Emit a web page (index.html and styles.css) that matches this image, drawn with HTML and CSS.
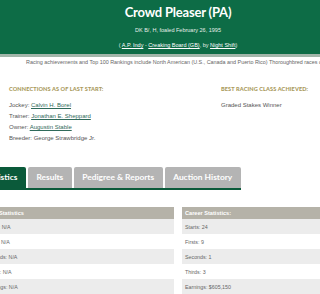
FILE: index.html
```html
<!DOCTYPE html>
<html lang="en">
<head>
    <meta charset="UTF-8">
    <meta name="viewport" content="width=device-width, initial-scale=1.0">
    <title>Crowd Pleaser (PA)</title>
    <link rel="stylesheet" href="styles.css">
</head>
<body>
    <div class="page">
        <header class="hero">
            <h1>Crowd Pleaser (PA)</h1>
            <p class="hero-meta">DK B/, H, foaled February 26, 1995</p>
            <p class="hero-meta hero-pedigree">( <a href="#">A.P. Indy</a> - <a href="#">Creaking Board (GB)</a>, by <a href="#">Night Shift</a>)</p>
        </header>

        <p class="disclaimer">Racing achievements and Top 100 Rankings include North American (U.S., Canada and Puerto Rico) Thoroughbred races only.</p>

        <div class="info">
            <div class="info-col">
                <h3>Connections as of last start:</h3>
                <p>Jockey: <a href="#">Calvin H. Borel</a></p>
                <p>Trainer: <a href="#">Jonathan E. Sheppard</a></p>
                <p>Owner: <a href="#">Augustin Stable</a></p>
                <p>Breeder: George Strawbridge Jr.</p>
            </div>
            <div class="info-col">
                <h3>Best racing class achieved:</h3>
                <p>Graded Stakes Winner</p>
            </div>
        </div>

        <ul class="tabs">
            <li class="tab active">Statistics</li>
            <li class="tab">Results</li>
            <li class="tab">Pedigree &amp; Reports</li>
            <li class="tab">Auction History</li>
        </ul>

        <div class="stats">
            <table class="stat-table">
                <tr><th>2024 Statistics</th></tr>
                <tr><td>Starts: N/A</td></tr>
                <tr><td>Firsts: N/A</td></tr>
                <tr><td>Seconds: N/A</td></tr>
                <tr><td>Thirds: N/A</td></tr>
                <tr><td>Earnings: N/A</td></tr>
            </table>
            <table class="stat-table">
                <tr><th>Career Statistics:</th></tr>
                <tr><td>Starts: 24</td></tr>
                <tr><td>Firsts: 9</td></tr>
                <tr><td>Seconds: 1</td></tr>
                <tr><td>Thirds: 3</td></tr>
                <tr><td>Earnings: $605,150</td></tr>
            </table>
        </div>
    </div>
</body>
</html>
```

FILE: styles.css
```css
html, body {
    overflow: hidden;
}
body {
    margin: 0;
    font-family: 'Liberation Sans', Arial, sans-serif;
    color: #555;
    background: #fff;
}
.page {
    width: 420px;
    margin-left: -32px;
}
.hero {
    background: #0d6c46;
    border-bottom: 3px solid #a2b6aa;
    color: #fff;
    text-align: center;
    padding: 3px 0 5px;
}
.hero h1 {
    margin: 0;
    font-family: 'Lato', sans-serif;
    font-weight: 700;
    font-size: 13px;
    line-height: 18px;
    letter-spacing: -0.2px;
}
.hero-meta {
    margin: 5px 0 0;
    font-size: 5.5px;
    line-height: 8px;
    color: #e6efe9;
}
.hero-pedigree {
    margin-top: 7px;
}
.hero-meta a {
    color: #fff;
}
.disclaimer {
    margin: 1px 0 0;
    text-align: center;
    white-space: nowrap;
    font-size: 5.4px;
    line-height: 8px;
    color: #666;
}
.info {
    display: flex;
    padding-left: 41px;
    margin-top: 19px;
}
.info-col:first-child {
    width: 212px;
}
.info h3 {
    margin: 0 0 7px;
    font-family: 'Lato', sans-serif;
    font-weight: 900;
    font-size: 5.6px;
    line-height: 8px;
    text-transform: uppercase;
    color: #a99a5c;
    letter-spacing: 0.1px;
}
.info p {
    margin: 0;
    font-size: 6px;
    line-height: 11px;
}
.info a {
    color: #2f6a5a;
}
.tabs {
    list-style: none;
    display: flex;
    gap: 2px;
    margin: 23px 0 0;
    padding: 0 0 0 7px;
    width: max-content;
    border-bottom: 2px solid #0b5a3a;
}
.tab {
    height: 21px;
    line-height: 21px;
    padding: 0 8.5px;
    background: #b4b4b4;
    color: #fff;
    font-family: 'Lato', sans-serif;
    font-weight: 700;
    font-size: 8.4px;
    border-radius: 2px 2px 0 0;
}
.tab.active {
    background: #0b5a3a;
}
.stats {
    display: flex;
    gap: 8px;
    padding: 0 14px;
    margin-top: 17px;
}
.stat-table {
    flex: 1;
    border-collapse: collapse;
}
.stat-table th {
    height: 12px;
    padding: 0 3px;
    background: #b5b2a8;
    color: #fff;
    text-align: left;
    font-size: 5.6px;
    font-weight: 700;
}
.stat-table td {
    height: 15px;
    padding: 0 3px;
    font-size: 5.3px;
    color: #666;
}
.stat-table tr:nth-child(even) td {
    background: #ececec;
}
```
